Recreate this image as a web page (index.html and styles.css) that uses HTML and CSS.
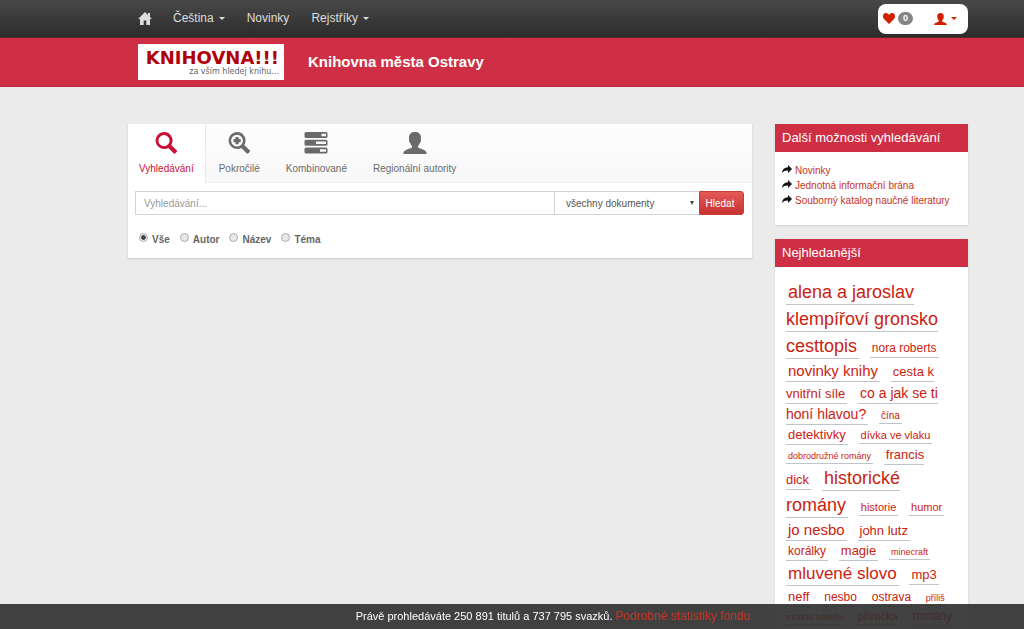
FILE: index.html
```html
<!DOCTYPE html>
<html lang="cs">
<head>
<meta charset="utf-8">
<title>Knihovna města Ostravy</title>
<link rel="stylesheet" href="styles.css">
</head>
<body>
<nav class="topbar wrap">
  <a class="nav-link home" href="#" aria-label="Domů"><svg width="14" height="13" viewBox="0 0 14 13"><path d="M7 0 14 7H12V13H8.300V8.500H5.700V13H2V7H0Z M10 1h2v4l-2-2z"/></svg></a>
  <a class="nav-link" href="#">Čeština <span class="caret"></span></a>
  <a class="nav-link" href="#">Novinky</a>
  <a class="nav-link" href="#">Rejstříky <span class="caret"></span></a>
  <div class="user-box">
    <a class="user-link" href="#" aria-label="Oblíbené"><svg width="12" height="11" viewBox="0 0 12 11"><path d="M6 11 1 6C-1 4 0 0 3 0c1.500 0 2.500 1 3 2 .5-1 1.500-2 3-2 3 0 4 4 2 6Z"/></svg><span class="badge">0</span></a>
    <a class="user-link" href="#" aria-label="Uživatel"><svg width="13" height="14" viewBox="0 0 24 24"><use href="#person"/></svg><span class="caret"></span></a>
  </div>
</nav>
<header class="brandbar wrap">
  <a class="logo" href="#"><span class="logo-name">KNIHOVNA!!!</span><span class="logo-sub">za vším hledej knihu...</span></a>
  <h1 class="title">Knihovna města Ostravy</h1>
</header>
<main class="main wrap">
  <section class="search">
    <div class="tabs">
      <button class="tab active" type="button"><svg width="24" height="24" viewBox="0 0 24 24"><path d="M10 1a8.500 8.500 0 1 0 4.300 15.900l5.300 5.300q.9.900 1.800 0l1.200-1.200q.9-.9 0-1.800l-5.300-5.300A8.500 8.500 0 0 0 10 1Zm0 3a5.600 5.600 0 1 1 0 11.200A5.600 5.600 0 0 1 10 4Z" fill-rule="evenodd"/></svg>Vyhledávání</button>
      <button class="tab" type="button"><svg width="24" height="24" viewBox="0 0 24 24"><path d="M10 1a8.500 8.500 0 1 0 4.300 15.900l5.300 5.300q.9.900 1.800 0l1.200-1.200q.9-.9 0-1.800l-5.300-5.300A8.500 8.500 0 0 0 10 1Zm0 2.700a5.900 5.900 0 1 1 0 11.800A5.900 5.900 0 0 1 10 3.700ZM8.500 6v2H6.500v3.200h2v2h3.200v-2h2V8h-2V6Z" fill-rule="evenodd"/></svg>Pokročilé</button>
      <button class="tab" type="button"><svg width="24" height="24" viewBox="0 0 24 24"><path d="M2 1h20a1.500 1.500 0 0 1 1.500 1.500v3A1.500 1.500 0 0 1 22 7H2A1.500 1.500 0 0 1 .5 5.500v-3A1.500 1.500 0 0 1 2 1ZM17.500 2.700v2.600H22V2.700ZM2 8.800h20a1.500 1.500 0 0 1 1.500 1.500v3a1.500 1.500 0 0 1-1.500 1.500H2a1.500 1.500 0 0 1-1.500-1.500v-3A1.500 1.500 0 0 1 2 8.800ZM12 10.500v2.600H22v-2.600ZM2 16.500h20a1.500 1.500 0 0 1 1.500 1.500v3a1.500 1.500 0 0 1-1.500 1.500H2A1.500 1.500 0 0 1 .5 21v-3A1.500 1.500 0 0 1 2 16.500Zm14 1.700v2.600h6v-2.600Z" fill-rule="evenodd"/></svg>Kombinované</button>
      <button class="tab" type="button"><svg width="24" height="24" viewBox="0 0 24 24"><path id="person" d="M12 1c3.600 0 6 2 6 5.500 0 .8-.1 1.500-.3 2 .7.400.4 2.500-.7 3-.4 1.500-1 2.500-2 3.500v1.500c2.500 1.500 6.500 2 8 4 .6.800.5 1.600.5 2.500H.5c0-.9-.1-1.700.5-2.500 1.500-2 5.500-2.500 8-4V15c-1-1-1.600-2-2-3.500-1.100-.5-1.400-2.600-.7-3C6.100 8 6 7.300 6 6.500 6 3 8.400 1 12 1Z"/></svg>Regionální autority</button>
    </div>
    <form class="form">
      <div class="query">
        <input class="text" type="text" placeholder="Vyhledávání..." aria-label="Vyhledávání">
        <div class="select-box"><select class="select" aria-label="Typ dokumentu"><option>všechny dokumenty</option></select></div>
        <button class="submit" type="submit">Hledat</button>
      </div>
      <div class="radios">
        <label class="choice"><input class="radio" type="radio" name="f" checked>Vše</label>
        <label class="choice"><input class="radio" type="radio" name="f">Autor</label>
        <label class="choice"><input class="radio" type="radio" name="f">Název</label>
        <label class="choice"><input class="radio" type="radio" name="f">Téma</label>
      </div>
    </form>
  </section>
  <aside class="side">
    <section class="panel">
      <h2 class="panel-title">Další možnosti vyhledávání</h2>
      <ul class="links">
        <li class="link-row"><svg width="10" height="9" viewBox="0 0 10 9"><path id="share" d="M6 0 10 4 6 8V5.500C3.500 5.300 1.500 6 0 8 .3 4.500 2.500 2.500 6 2.300Z"/></svg><a class="link" href="#">Novinky</a></li>
        <li class="link-row"><svg width="10" height="9" viewBox="0 0 10 9"><use href="#share"/></svg><a class="link" href="#">Jednotná informační brána</a></li>
        <li class="link-row"><svg width="10" height="9" viewBox="0 0 10 9"><use href="#share"/></svg><a class="link" href="#">Souborný katalog naučné literatury</a></li>
      </ul>
    </section>
    <section class="panel">
      <h2 class="panel-title">Nejhledanější</h2>
      <div class="cloud">
        <a class="tag s18" href="#">alena a jaroslav klempířoví gronsko cesttopis</a>
        <a class="tag s12" href="#">nora roberts</a>
        <a class="tag s15" href="#">novinky knihy</a>
        <a class="tag s13" href="#">cesta k vnitřní síle</a>
        <a class="tag s14" href="#">co a jak se ti honí hlavou?</a>
        <a class="tag s10" href="#">čína</a>
        <a class="tag s13" href="#">detektivky</a>
        <a class="tag s11" href="#">dívka ve vlaku</a>
        <a class="tag s9" href="#">dobrodružné romány</a>
        <a class="tag s13" href="#">francis dick</a>
        <a class="tag s18" href="#">historické romány</a>
        <a class="tag s11" href="#">historie</a>
        <a class="tag s11" href="#">humor</a>
        <a class="tag s15" href="#">jo nesbo</a>
        <a class="tag s13" href="#">john lutz</a>
        <a class="tag s12" href="#">korálky</a>
        <a class="tag s13" href="#">magie</a>
        <a class="tag s9" href="#">minecraft</a>
        <a class="tag s17" href="#">mluvené slovo</a>
        <a class="tag s13" href="#">mp3</a>
        <a class="tag s13" href="#">neff</a>
        <a class="tag s12" href="#">nesbo</a>
        <a class="tag s12" href="#">ostrava</a>
        <a class="tag s9" href="#">příliš mnoho kateřin</a>
        <a class="tag s11" href="#">příručka</a>
        <a class="tag s12" href="#">romány</a>
      </div>
    </section>
  </aside>
</main>
<footer class="stats">Právě prohledáváte 250 891 titulů a 737 795 svazků. <a class="stats-link" href="#">Podrobné statistiky fondu</a></footer>
</body>
</html>
```
FILE: styles.css
```css
* { box-sizing: border-box; }
body {
  margin: 0;
  height: 100vh;
  overflow: hidden;
  background: #ebebeb;
  color: #666;
  font: 10px/15px "Liberation Sans", Arial, sans-serif;
}
a { text-decoration: none; }
svg { fill: currentColor; flex: none; }
.wrap { padding-left: 12.5%; padding-right: 56px; }

.topbar {
  display: flex;
  align-items: center;
  height: 38px;
  background: linear-gradient(#484848, #2c2c2c);
  border-bottom: 1px solid #5a2630;
}
.nav-link {
  display: flex;
  align-items: center;
  gap: 5px;
  padding: 0 11px;
  color: #ddd;
  font-size: 12px;
}
.home { padding: 0 10px; }
.caret {
  border: 3px solid transparent;
  border-top-color: currentColor;
  border-bottom: 0;
}
.user-box {
  display: flex;
  align-items: center;
  justify-content: space-between;
  width: 90px;
  height: 30px;
  margin-left: auto;
  padding: 0 11px 0 5px;
  border-radius: 8px;
  background: #fff;
}
.user-link { display: flex; align-items: center; gap: 3px; color: #d02000; }
.user-link .caret { margin-left: 1px; }
.badge {
  padding: 0 5px;
  border-radius: 7px;
  background: #858585;
  color: #fff;
  font-size: 9px;
  font-weight: bold;
  line-height: 13px;
}

.brandbar {
  display: flex;
  align-items: center;
  gap: 24px;
  height: 49px;
  background: #cf2f45;
  border-bottom: 1px solid #c02a3f;
}
.logo {
  display: flex;
  flex-direction: column;
  align-items: flex-end;
  width: 146px;
  height: 36px;
  margin-left: 10px;
  padding: 4px 5px 0 0;
  background: #fff;
}
.logo-name { color: #b00008; font: bold 18px/19px "DejaVu Sans", sans-serif; }
.logo-sub { color: #666; font: 8px/10px "DejaVu Sans", sans-serif; }
.title { margin: 0; color: #fff; font-size: 15px; line-height: 20px; }

.main { display: flex; align-items: flex-start; gap: 23px; padding-top: 37px; }
.search { flex: 1; background: #fff; box-shadow: 0 1px 2px #ccc; }
.tabs {
  display: flex;
  height: 59px;
  background: linear-gradient(#fdfdfd, #f8f8f8);
  border-bottom: 1px solid #eee;
}
.tab {
  display: flex;
  flex-direction: column;
  align-items: center;
  gap: 6px;
  padding: 7px 13px 0;
  border: 0;
  background: none;
  color: #6a6a6a;
  font: inherit;
}
.active {
  height: 59px;
  padding: 7px 11px 0;
  border-right: 1px solid #e8e8e8;
  background: #fff;
  color: #cb1036;
}
.form { padding: 8px 8px 10px 7px; }
.query { display: flex; height: 24px; }
.text {
  flex: 1;
  min-width: 0;
  padding: 0 8px;
  border: 1px solid #d4d4d4;
  font: inherit;
}
.text::placeholder { color: #999; }
.select-box { position: relative; width: 144px; }
.select-box::after {
  content: "";
  position: absolute;
  right: 5px;
  top: 10px;
  border: 2px solid transparent;
  border-top: 4px solid #444;
  border-bottom: 0;
}
.select {
  appearance: none;
  width: 100%;
  height: 100%;
  padding: 0 11px;
  border: 1px solid #d4d4d4;
  border-width: 1px 0;
  border-radius: 0;
  background: #fff;
  color: #555;
  font: inherit;
}
.submit {
  width: 45px;
  padding: 0 3px 0 0;
  border: 1px solid #c83c3a;
  border-radius: 0 3px 3px 0;
  background: linear-gradient(#e35a55, #c83230);
  color: #fff;
  font: inherit;
}
.radios { display: flex; gap: 10px; padding: 17px 4px 0; }
.choice {
  display: flex;
  align-items: flex-start;
  gap: 4px;
  font-weight: bold;
  line-height: 16px;
}
.radio {
  appearance: none;
  width: 9px;
  height: 9px;
  margin: 1px 0 0;
  border: 1px solid #aaa;
  border-radius: 50%;
  background: #e8e8e8;
}
.radio:checked { background: radial-gradient(#444 40%, #eee 55%); }

.side { width: 193px; }
.panel { margin-bottom: 14px; background: #fff; box-shadow: 0 1px 2px #d0d0d0; }
.panel-title {
  margin: 0;
  padding: 0 7px;
  background: #cf2f45;
  color: #fff;
  font-size: 13px;
  font-weight: normal;
  line-height: 28px;
}
.links { margin: 0; padding: 11px 7px 17px; list-style: none; }
.link-row { display: flex; align-items: flex-start; gap: 3px; color: #111; }
.link-row svg { margin-top: 2px; }
.link { color: #c83220; }

.cloud { padding: 12px 11px; line-height: 18px; }
.tag {
  margin-right: 8px;
  padding: 0 2px 2px;
  border-bottom: 1px solid #bcc4cc;
  color: #cc2210;
  line-height: 1.5;
}
.tag:last-child { margin-right: 0; }
.s9 { font-size: 9px; }
.s10 { font-size: 10px; }
.s11 { font-size: 11px; }
.s12 { font-size: 12px; }
.s13 { font-size: 13px; }
.s14 { font-size: 14px; }
.s15 { font-size: 15px; }
.s17 { font-size: 17px; }
.s18 { font-size: 18px; }

.stats {
  position: fixed;
  inset: auto 0 0;
  padding: 3px 0 4px 82px;
  background: rgba(45, 45, 45, .9);
  color: #fff;
  font-size: 11px;
  line-height: 18px;
  text-align: center;
}
.stats-link { color: #c83426; font-size: 12px; }
```
